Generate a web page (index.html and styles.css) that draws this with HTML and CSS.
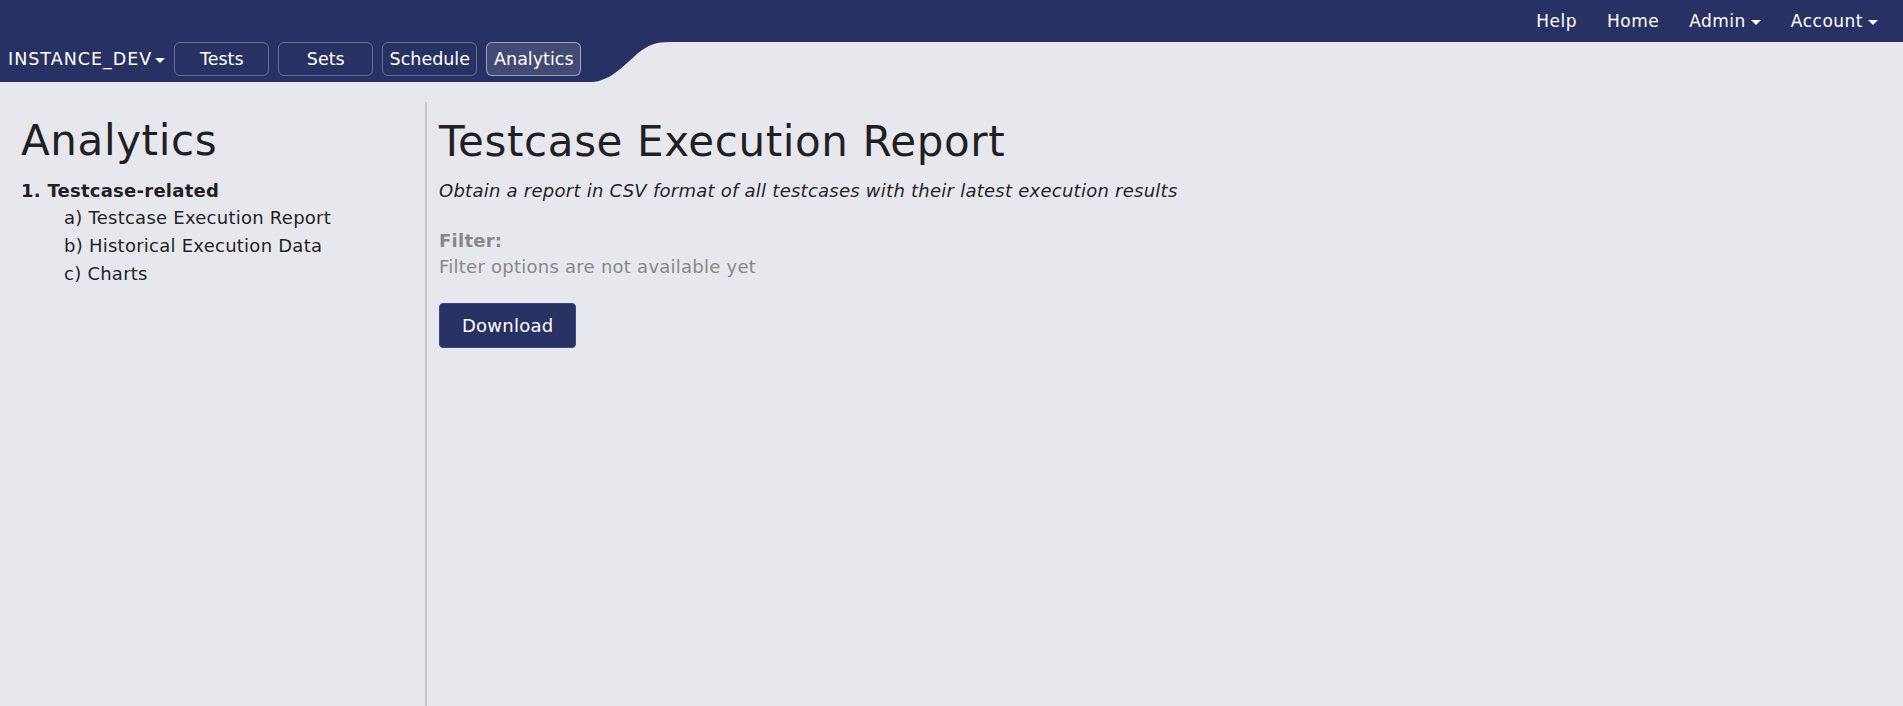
FILE: index.html
```html
<!DOCTYPE html>
<html lang="en">
<head>
  <meta charset="UTF-8">
  <meta name="viewport" content="width=device-width, initial-scale=1.0">
  <title>Analytics - Testcase Execution Report</title>
  <link rel="stylesheet" href="styles.css">
</head>
<body>

  <header class="header">
    <div class="topbar">
      <a class="top-link" href="#">Help</a>
      <a class="top-link" href="#">Home</a>
      <a class="top-link" href="#">Admin<span class="caret"></span></a>
      <a class="top-link" href="#">Account<span class="caret"></span></a>
    </div>
    <div class="navrow">
      <nav class="navbar">
        <a class="instance" href="#">INSTANCE_DEV<span class="caret"></span></a>
        <a class="nav-btn" href="#">Tests</a>
        <a class="nav-btn" href="#">Sets</a>
        <a class="nav-btn" href="#">Schedule</a>
        <a class="nav-btn active" href="#">Analytics</a>
      </nav>
      <svg class="nav-curve" width="80" height="40" viewBox="0 0 80 40">
        <path d="M0 0 H78 C64 0 56 3 46 11 C34 22 22 34 12 37 C8 39 4 40 0 40 Z" fill="#283163"/>
      </svg>
    </div>
  </header>

  <div class="content">
    <aside class="sidebar">
      <h1>Analytics</h1>
      <ol class="menu">
        <li>
          <div class="menu-title">1. Testcase-related</div>
          <ul class="submenu">
            <li>a) Testcase Execution Report</li>
            <li>b) Historical Execution Data</li>
            <li>c) Charts</li>
          </ul>
        </li>
      </ol>
    </aside>

    <main class="report">
      <h1>Testcase Execution Report</h1>
      <p class="subtitle">Obtain a report in CSV format of all testcases with their latest execution results</p>
      <div class="filter-label">Filter:</div>
      <div class="filter-note">Filter options are not available yet</div>
      <button class="download" type="button">Download</button>
    </main>
  </div>

</body>
</html>
```

FILE: styles.css
```css
body {
  font-family: "DejaVu Sans", Verdana, sans-serif;
  margin: 0;
  padding: 0;
  background-color: #e7e8ee;
  color: #1f1f24;
  letter-spacing: 0.25px;
}

a {
  color: #fff;
  text-decoration: none;
}

.topbar {
  background-color: #283163;
  height: 42px;
  display: flex;
  justify-content: flex-end;
  align-items: center;
  padding-right: 10px;
}

.top-link {
  font-size: 17px;
  letter-spacing: 0.5px;
  padding: 0 15px;
  display: flex;
  align-items: center;
}

.caret {
  display: inline-block;
  width: 0;
  height: 0;
  border-left: 5px solid transparent;
  border-right: 5px solid transparent;
  border-top: 5px solid #fff;
  margin-left: 5px;
  margin-top: 2px;
}

.navrow {
  display: flex;
  height: 40px;
}

.navbar {
  width: 592px;
  box-sizing: border-box;
  background-color: #283163;
  display: flex;
  align-items: flex-start;
  gap: 9px;
  padding-left: 8px;
}

.instance {
  height: 34px;
  display: flex;
  align-items: center;
  font-size: 17.5px;
  letter-spacing: 1px;
}

.instance .caret {
  margin-left: 3px;
}

.nav-btn {
  min-width: 95px;
  height: 34px;
  box-sizing: border-box;
  padding: 0 6px;
  border: 1px solid rgba(255, 255, 255, 0.3);
  border-radius: 6px;
  font-size: 17.5px;
  letter-spacing: 0;
  display: flex;
  align-items: center;
  justify-content: center;
}

.nav-btn.active {
  background-color: rgba(255, 255, 255, 0.12);
  border-color: rgba(255, 255, 255, 0.5);
}

.nav-curve {
  display: block;
}

.content {
  display: flex;
  min-height: calc(100vh - 82px);
}

.sidebar {
  width: 404px;
  flex-shrink: 0;
  margin-top: 20px;
  padding: 14px 0 0 21px;
  border-right: 2px solid #c6c7ce;
}

.sidebar h1, .report h1 {
  margin: 0;
  font-size: 42px;
  font-weight: normal;
  line-height: 50px;
  letter-spacing: 0.6px;
}

.menu {
  list-style: none;
  margin: 12px 0 0;
  padding: 0;
}

.menu-title {
  font-size: 18px;
  font-weight: bold;
  line-height: 26px;
}

.submenu {
  list-style: none;
  margin: 0;
  padding-left: 43px;
  font-size: 18px;
  line-height: 28px;
}

.report {
  padding: 35px 0 0 12px;
}

.subtitle {
  margin: 11px 0 0;
  font-size: 18px;
  font-style: italic;
  line-height: 26px;
}

.filter-label {
  margin-top: 24px;
  font-size: 18px;
  font-weight: bold;
  line-height: 26px;
  color: #888;
}

.filter-note {
  font-size: 18px;
  line-height: 26px;
  color: #888;
}

.download {
  margin-top: 23px;
  padding: 8.5px 22px;
  font-family: inherit;
  font-size: 18px;
  line-height: 26px;
  letter-spacing: 0.25px;
  color: #fff;
  background-color: #283163;
  border: 1px solid #3c4577;
  border-radius: 4px;
  cursor: pointer;
}
```
